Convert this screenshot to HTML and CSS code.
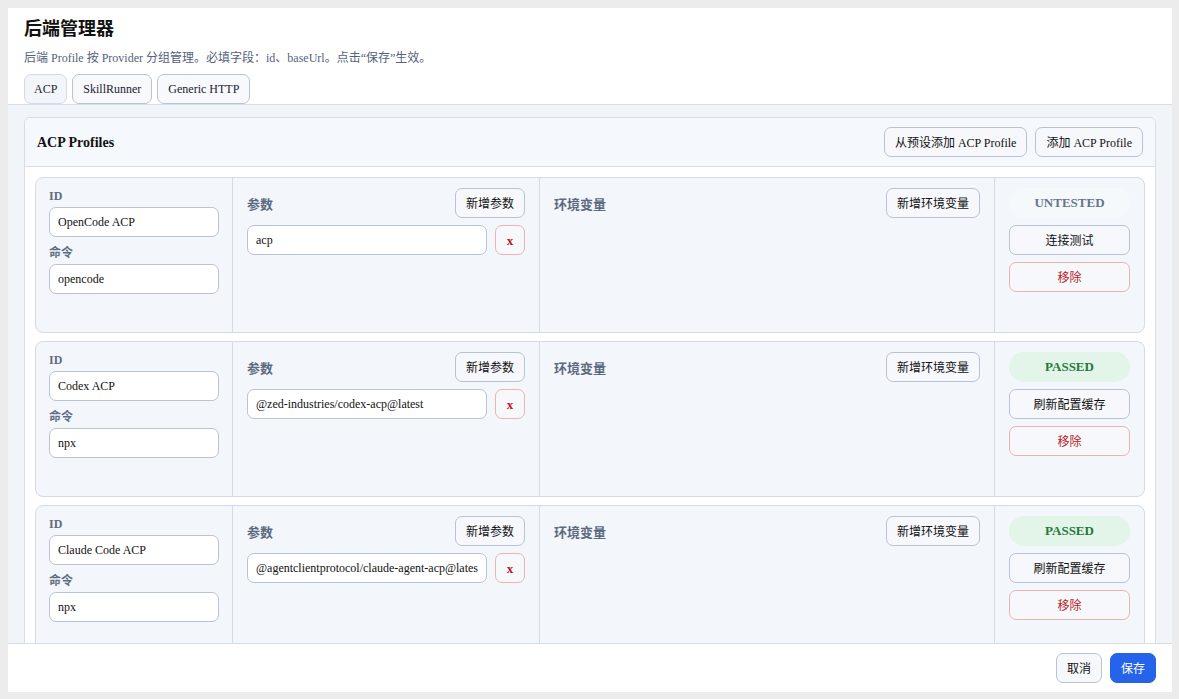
FILE: index.html
```html
<!DOCTYPE html>
<html lang="zh-CN">
<head>
<meta charset="utf-8">
<title>后端管理器</title>
<link rel="stylesheet" href="styles.css">
</head>
<body>
<div class="dialog">
  <header class="dlg-head">
    <h1 class="dlg-title">后端管理器</h1>
    <p class="dlg-desc">后端 Profile 按 Provider 分组管理。必填字段：id、baseUrl。点击“保存”生效。</p>
    <nav class="tabs">
      <button class="tab is-active" type="button">ACP</button>
      <button class="tab" type="button">SkillRunner</button>
      <button class="tab" type="button">Generic HTTP</button>
    </nav>
  </header>

  <main class="dlg-body">
    <section class="card">
      <div class="card-head">
        <h2 class="card-title">ACP Profiles</h2>
        <div class="card-actions">
          <button class="btn" type="button">从预设添加 ACP Profile</button>
          <button class="btn" type="button">添加 ACP Profile</button>
        </div>
      </div>

      <div class="card-list">
        <article class="profile">
          <div class="col col-id">
            <label class="field">
              <span class="field-label">ID</span>
              <input class="input" type="text" value="OpenCode ACP">
            </label>
            <label class="field">
              <span class="field-label">命令</span>
              <input class="input" type="text" value="opencode">
            </label>
          </div>
          <div class="col col-args">
            <div class="col-head">
              <span class="col-title">参数</span>
              <button class="btn" type="button">新增参数</button>
            </div>
            <div class="arg-row">
              <input class="input" type="text" value="acp">
              <button class="btn btn-x" type="button">x</button>
            </div>
          </div>
          <div class="col col-env">
            <div class="col-head">
              <span class="col-title">环境变量</span>
              <button class="btn" type="button">新增环境变量</button>
            </div>
          </div>
          <div class="col col-status">
            <span class="pill pill-untested">UNTESTED</span>
            <button class="btn btn-block" type="button">连接测试</button>
            <button class="btn btn-block btn-danger" type="button">移除</button>
          </div>
        </article>

        <article class="profile">
          <div class="col col-id">
            <label class="field">
              <span class="field-label">ID</span>
              <input class="input" type="text" value="Codex ACP">
            </label>
            <label class="field">
              <span class="field-label">命令</span>
              <input class="input" type="text" value="npx">
            </label>
          </div>
          <div class="col col-args">
            <div class="col-head">
              <span class="col-title">参数</span>
              <button class="btn" type="button">新增参数</button>
            </div>
            <div class="arg-row">
              <input class="input" type="text" value="@zed-industries/codex-acp@latest">
              <button class="btn btn-x" type="button">x</button>
            </div>
          </div>
          <div class="col col-env">
            <div class="col-head">
              <span class="col-title">环境变量</span>
              <button class="btn" type="button">新增环境变量</button>
            </div>
          </div>
          <div class="col col-status">
            <span class="pill pill-passed">PASSED</span>
            <button class="btn btn-block" type="button">刷新配置缓存</button>
            <button class="btn btn-block btn-danger" type="button">移除</button>
          </div>
        </article>

        <article class="profile">
          <div class="col col-id">
            <label class="field">
              <span class="field-label">ID</span>
              <input class="input" type="text" value="Claude Code ACP">
            </label>
            <label class="field">
              <span class="field-label">命令</span>
              <input class="input" type="text" value="npx">
            </label>
          </div>
          <div class="col col-args">
            <div class="col-head">
              <span class="col-title">参数</span>
              <button class="btn" type="button">新增参数</button>
            </div>
            <div class="arg-row">
              <input class="input" type="text" value="@agentclientprotocol/claude-agent-acp@latest">
              <button class="btn btn-x" type="button">x</button>
            </div>
          </div>
          <div class="col col-env">
            <div class="col-head">
              <span class="col-title">环境变量</span>
              <button class="btn" type="button">新增环境变量</button>
            </div>
          </div>
          <div class="col col-status">
            <span class="pill pill-passed">PASSED</span>
            <button class="btn btn-block" type="button">刷新配置缓存</button>
            <button class="btn btn-block btn-danger" type="button">移除</button>
          </div>
        </article>
      </div>
    </section>
  </main>

  <footer class="dlg-foot">
    <button class="btn" type="button">取消</button>
    <button class="btn btn-primary" type="button">保存</button>
  </footer>
</div>
</body>
</html>
```

FILE: styles.css
```css
* {
  box-sizing: border-box;
}

html,
body {
  overflow: hidden;
}

body {
  margin: 8px 7px 7px 8px;
  background: #ececec;
  font-family: "Liberation Serif", "Noto Sans CJK SC", serif;
  font-size: 12px;
  color: #111827;
}

button,
input {
  font: inherit;
  color: inherit;
  margin: 0;
}

/* dialog shell */
.dialog {
  width: 1164px;
  height: 684px;
  background: #ffffff;
  display: flex;
  flex-direction: column;
  overflow: hidden;
}

.dlg-head {
  padding: 10px 16px 0;
  border-bottom: 1px solid #d6dde7;
  flex: none;
}

.dlg-title {
  margin: 0;
  font-size: 18px;
  line-height: 22px;
  font-weight: 700;
  color: #111111;
}

.dlg-desc {
  margin: 9px 0 7px;
  font-size: 12px;
  line-height: 18px;
  color: #55627a;
}

.tabs {
  display: flex;
  gap: 5px;
}

.tab {
  height: 30px;
  padding: 0 10px;
  border: 1px solid #b9c3d3;
  border-radius: 7px;
  background: #f7f9fc;
  color: #1c2230;
  cursor: pointer;
}

.tab.is-active {
  padding: 0 9px;
  background: #f2f5f9;
  border-color: #d3dae5;
}

/* scrolling body */
.dlg-body {
  flex: 1;
  min-height: 0;
  overflow: hidden;
  background: #f1f4f8;
  padding: 12px 16px;
}

.card {
  background: #ffffff;
  border: 1px solid #d6dde7;
  border-radius: 6px;
}

.card-head {
  display: flex;
  align-items: center;
  justify-content: space-between;
  padding: 9px 12px;
  background: #f5f8fc;
  border-bottom: 1px solid #d6dde7;
  border-radius: 6px 6px 0 0;
}

.card-title {
  margin: 0;
  font-size: 14px;
  font-weight: 700;
  color: #111111;
  position: relative;
  top: 1px;
}

.card-actions {
  display: flex;
  gap: 8px;
}

.card-list {
  display: flex;
  flex-direction: column;
  gap: 8px;
  padding: 10px;
}

/* profile row */
.profile {
  display: grid;
  grid-template-columns: 196px 307px 1fr 150px;
  min-height: 156px;
  background: #f3f6fb;
  border: 1px solid #d3dbe6;
  border-radius: 8px;
}

.col {
  padding: 10px 14px;
  display: flex;
  flex-direction: column;
  gap: 7px;
}

.col + .col {
  border-left: 1px solid #d3dbe6;
}

.col-id {
  padding: 9px 13px 10px 13px;
}

.field {
  display: flex;
  flex-direction: column;
  gap: 2px;
}

.field-label {
  font-size: 12px;
  line-height: 18px;
  font-weight: 600;
  color: #5f6d82;
}

.col-head {
  display: flex;
  align-items: center;
  justify-content: space-between;
}

.col-title {
  font-size: 13px;
  font-weight: 700;
  color: #5b6a80;
}

.arg-row {
  display: flex;
  gap: 8px;
}

.arg-row .input {
  flex: 1;
  min-width: 0;
}

.input {
  height: 30px;
  width: 100%;
  padding: 0 8px;
  background: #ffffff;
  border: 1px solid #b9c3d5;
  border-radius: 7px;
  font-size: 12px;
  color: #111111;
  outline: none;
}

/* buttons */
.btn {
  display: inline-flex;
  align-items: center;
  justify-content: center;
  height: 30px;
  padding: 0 10px;
  background: #f6f8fc;
  border: 1px solid #b8c2d4;
  border-radius: 7px;
  color: #111111;
  white-space: nowrap;
  cursor: pointer;
}

.btn-block {
  width: 100%;
}

.btn-x {
  width: 30px;
  padding: 2px 0 0;
  flex: none;
  border-color: #ebb3b3;
  color: #c0121f;
  font-weight: 700;
  font-size: 13px;
}

.btn-danger {
  border-color: #ebb3b3;
  color: #b91c1c;
}

.btn-primary {
  background: #2563eb;
  border-color: #2563eb;
  color: #ffffff;
}

/* status pill */
.pill {
  height: 30px;
  display: flex;
  align-items: center;
  justify-content: center;
  border-radius: 15px;
  font-size: 13px;
  font-weight: 700;
}

.pill-untested {
  background: #f6f9fc;
  color: #66758c;
}

.pill-passed {
  background: #e3f4e8;
  color: #1f7a3c;
}

/* footer */
.dlg-foot {
  flex: none;
  display: flex;
  justify-content: flex-end;
  gap: 8px;
  padding: 9px 16px;
  border-top: 1px solid #d6dde7;
  background: #ffffff;
}
```
